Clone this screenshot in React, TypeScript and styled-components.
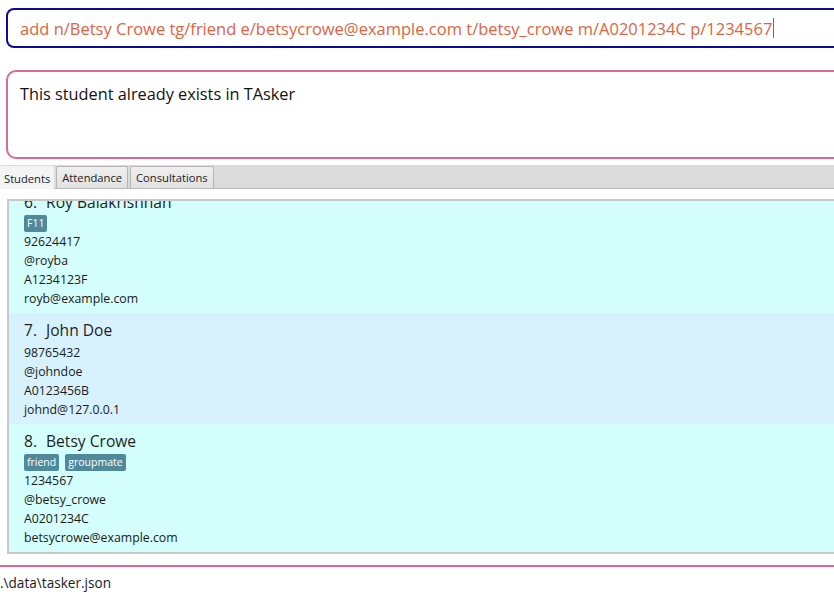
import React, { useLayoutEffect, useRef } from "react";
import styled, { createGlobalStyle } from "styled-components";

const Global = createGlobalStyle`
  html, body { margin: 0; padding: 0; background: #ffffff; overflow: hidden; }
  body { font-family: "Open Sans", "Noto Sans", sans-serif; }
  * { box-sizing: border-box; }
`;

const Window = styled.div`
  width: 880px;
  height: 600px;
  display: flex;
  flex-direction: column;
  background: #ffffff;
`;

const CommandBox = styled.div`
  margin: 8px 0 0 6px;
  height: 40px;
  border: 2px solid #0a0a9c;
  border-radius: 8px;
  display: flex;
  align-items: center;
  padding-left: 12px;
  font-size: 16.5px;
  color: #e0633f;
  white-space: nowrap;
`;

const Caret = styled.span`
  display: inline-block;
  width: 1px;
  height: 20px;
  background: #c0502f;
  margin-left: 1px;
`;

const ResultBox = styled.div`
  margin: 22px 0 0 6px;
  height: 89px;
  border: 2px solid #e0688e;
  border-radius: 10px;
  padding: 11px 12px 0;
  font-size: 16.3px;
  color: #111111;
`;

const TabBar = styled.div`
  margin-top: 6px;
  height: 24px;
  background: #dcdcdc;
  border-bottom: 1px solid #b8b8b8;
  display: flex;
  align-items: flex-end;
  gap: 2px;
`;

const Tab = styled.div<{ $active?: boolean }>`
  height: ${(p) => (p.$active ? "23px" : "22px")};
  padding: 0 ${(p) => (p.$active ? "3px" : "5px")};
  font-size: 11.2px;
  color: #222222;
  display: flex;
  align-items: center;
  background: ${(p) => (p.$active ? "#f4f4f4" : "linear-gradient(#efefef, #e2e2e2)")};
  border: 1px solid ${(p) => (p.$active ? "#f4f4f4" : "#b4b4b4")};
  border-bottom: none;
  margin-bottom: ${(p) => (p.$active ? "-1px" : "0")};
  border-radius: 2px 2px 0 0;
`;

const ListFrame = styled.div`
  margin: 10px 0 0 7px;
  height: 355px;
  border: 2px solid #c8c8c8;
  border-right: none;
  overflow: hidden;
`;

const Scroller = styled.div`
  height: 100%;
  overflow: hidden;
`;

const Card = styled.div<{ $alt?: boolean }>`
  background: ${(p) => (p.$alt ? "#d8f2fd" : "#d3fefc")};
  padding: 7px 15px 5px;
  color: #1a1a1a;
`;

const Name = styled.div`
  font-size: 15.6px;
  line-height: 20px;
  color: #1e1e1e;
`;

const Num = styled.span`
  display: inline-block;
  margin-right: 9px;
`;

const Tags = styled.div`
  display: flex;
  gap: 6px;
  margin-top: 3px;
`;

const TagSpacer = styled.div`
  height: 3px;
`;

const Tag = styled.span`
  background: #4e8a9c;
  color: #ffffff;
  font-size: 10.5px;
  line-height: 17px;
  height: 17px;
  padding: 0 3px;
  border-radius: 2px;
`;

const Line = styled.div`
  font-size: 12.3px;
  line-height: 19px;
`;

const Footer = styled.div`
  margin-top: 11px;
  border-top: 2px solid #e0688e;
  padding-top: 6px;
  font-size: 13.6px;
  color: #1a1a1a;
`;

type Student = {
  idx: number;
  name: string;
  tags: string[];
  phone: string;
  tele: string;
  id: string;
  email: string;
};

const students: Student[] = [
  { idx: 6, name: "Roy Balakrishnan", tags: ["F11"], phone: "92624417", tele: "@royba", id: "A1234123F", email: "royb@example.com" },
  { idx: 7, name: "John Doe", tags: [], phone: "98765432", tele: "@johndoe", id: "A0123456B", email: "johnd@127.0.0.1" },
  { idx: 8, name: "Betsy Crowe", tags: ["friend", "groupmate"], phone: "1234567", tele: "@betsy_crowe", id: "A0201234C", email: "betsycrowe@example.com" },
];

export default function App() {
  const ref = useRef<HTMLDivElement>(null);
  useLayoutEffect(() => {
    if (ref.current) ref.current.scrollTop = ref.current.scrollHeight;
  }, []);
  return (
    <Window>
      <Global />
      <CommandBox>
        add n/Betsy Crowe tg/friend e/betsycrowe@example.com t/betsy_crowe m/A0201234C p/1234567
        <Caret />
      </CommandBox>
      <ResultBox>This student already exists in TAsker</ResultBox>
      <TabBar>
        <Tab $active>Students</Tab>
        <Tab>Attendance</Tab>
        <Tab>Consultations</Tab>
      </TabBar>
      <ListFrame>
        <Scroller ref={ref}>
          {students.map((s, i) => (
            <Card key={s.idx} $alt={i % 2 === 1}>
              <Name>
                <Num>{s.idx}.</Num>
                {s.name}
              </Name>
              {s.tags.length > 0 ? (
                <Tags>
                  {s.tags.map((t) => (
                    <Tag key={t}>{t}</Tag>
                  ))}
                </Tags>
              ) : (
                <TagSpacer />
              )}
              <Line>{s.phone}</Line>
              <Line>{s.tele}</Line>
              <Line>{s.id}</Line>
              <Line>{s.email}</Line>
            </Card>
          ))}
        </Scroller>
      </ListFrame>
      <Footer>.\data\tasker.json</Footer>
    </Window>
  );
}
